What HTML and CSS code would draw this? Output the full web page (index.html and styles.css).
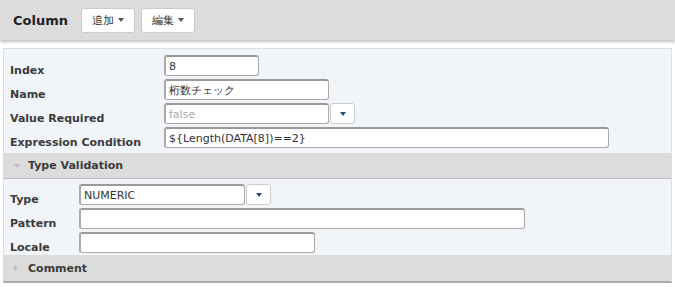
FILE: index.html
```html
<!DOCTYPE html>
<html>
<head>
<meta charset="utf-8">
<link rel="stylesheet" href="styles.css">
</head>
<body>

<!--toolbar-->
<div class="toolbar">
  <span class="title">Column</span>
  <span class="btn">追加 <i class="caret"></i></span>
  <span class="btn">編集 <i class="caret"></i></span>
</div>

<div class="panel">
  <div class="fields main">
    <div class="row"><label>Index</label><input class="in w-index" value="8"></div>
    <div class="row"><label>Name</label><input class="in w-name" value="桁数チェック"></div>
    <div class="row"><label>Value Required</label><input class="in w-name muted" value="false"><span class="drop"><i class="caret"></i></span></div>
    <div class="row"><label>Expression Condition</label><input class="in w-expr" value="${Length(DATA[8])==2}"></div>
  </div>

  <div class="section open"><i class="tri-down"></i>Type Validation</div>
  <div class="fields sub">
    <div class="row"><label>Type</label><input class="in w-type" value="NUMERIC"><span class="drop"><i class="caret"></i></span></div>
    <div class="row"><label>Pattern</label><input class="in w-pattern" value=""></div>
    <div class="row"><label>Locale</label><input class="in w-locale" value=""></div>
  </div>

  <div class="section closed"><i class="tri-right"></i>Comment</div>
</div>

</body>
</html>
```
FILE: styles.css
```css
* {box-sizing: border-box;}

body{
  margin:0px;
  background:#fff;
  font-family:"DejaVu Sans", Verdana, sans-serif;
  font-size:11px;
  color:#333;
}

/*top bar*/

.toolbar{
  background:#dcdcdc;
  height:40px;
  display:flex;
  align-items:center;
  padding-left:13px;
  box-shadow:0px 2px 3px rgba(0,0,0,0.25);
}

.title{
  font-weight:bold;
  font-size:13px;
  color:#222;
  margin-right:13px;
}

.btn{
  background:#fff;
  border:1px solid #ccc;
  border-radius:3px;
  width:54px;
  height:25px;
  margin-right:6px;
  display:flex;
  align-items:center;
  justify-content:center;
  gap:4px;
  font-size:11px;
  color:#333;
}

.caret{
  display:inline-block;
  width:0px;
  height:0px;
  border-left:3px solid transparent;
  border-right:3px solid transparent;
  border-top:4px solid #555;
}

/*panel*/

.panel{
  margin:8px 3px 0px 3px;
  border:1px solid #ddd;
  border-bottom:2px solid #aaa;
  background:#f1f4f9;
}

.fields{
  display:flex;
  flex-direction:column;
  gap:3px;
}

.main{
  padding:6px 0px 5px 0px;
}

.sub{
  padding:5px 0px 2px 0px;
}

.row{
  display:flex;
  align-items:center;
  height:21px;
}

.row label{
  font-weight:bold;
  color:#3b3b3b;
  padding-left:6px;
  padding-top:9px;
}

.main label{width:160px;}
.sub label{width:75px;}

.in{
  height:21px;
  border:1px solid #aaa;
  border-top:2px solid #999;
  border-left:2px solid #aaa;
  border-radius:3px;
  background:#fff;
  font-family:"DejaVu Sans", Verdana, sans-serif;
  font-size:11px;
  color:#333;
  padding:0px 3px;
  outline:none;
}

.muted{color:#aaa;}

.w-index{width:95px;}
.w-name{width:165px;}
.w-expr{width:445px;}
.w-type{width:166px;}
.w-pattern{width:446px;}
.w-locale{width:236px;}

.drop{
  width:25px;
  height:21px;
  margin-left:1px;
  background:#fff;
  border:1px solid #ccc;
  border-radius:3px;
  display:flex;
  align-items:center;
  justify-content:center;
}

.drop .caret{border-top-color:#2b4a6b;}

/*section headers*/

.section{
  background:#dcdcdc;
  height:26px;
  display:flex;
  align-items:center;
  font-weight:bold;
  color:#3b3b3b;
  padding-left:10px;
}

.section.open{border-bottom:1px solid #bbb;}

.tri-down{
  width:0px;
  height:0px;
  border-left:3px solid transparent;
  border-right:3px solid transparent;
  border-top:4px solid #bbb;
  margin-right:8px;
}

.tri-right{
  width:0px;
  height:0px;
  border-top:3px solid transparent;
  border-bottom:3px solid transparent;
  border-left:4px solid #bbb;
  margin-right:10px;
}
```
